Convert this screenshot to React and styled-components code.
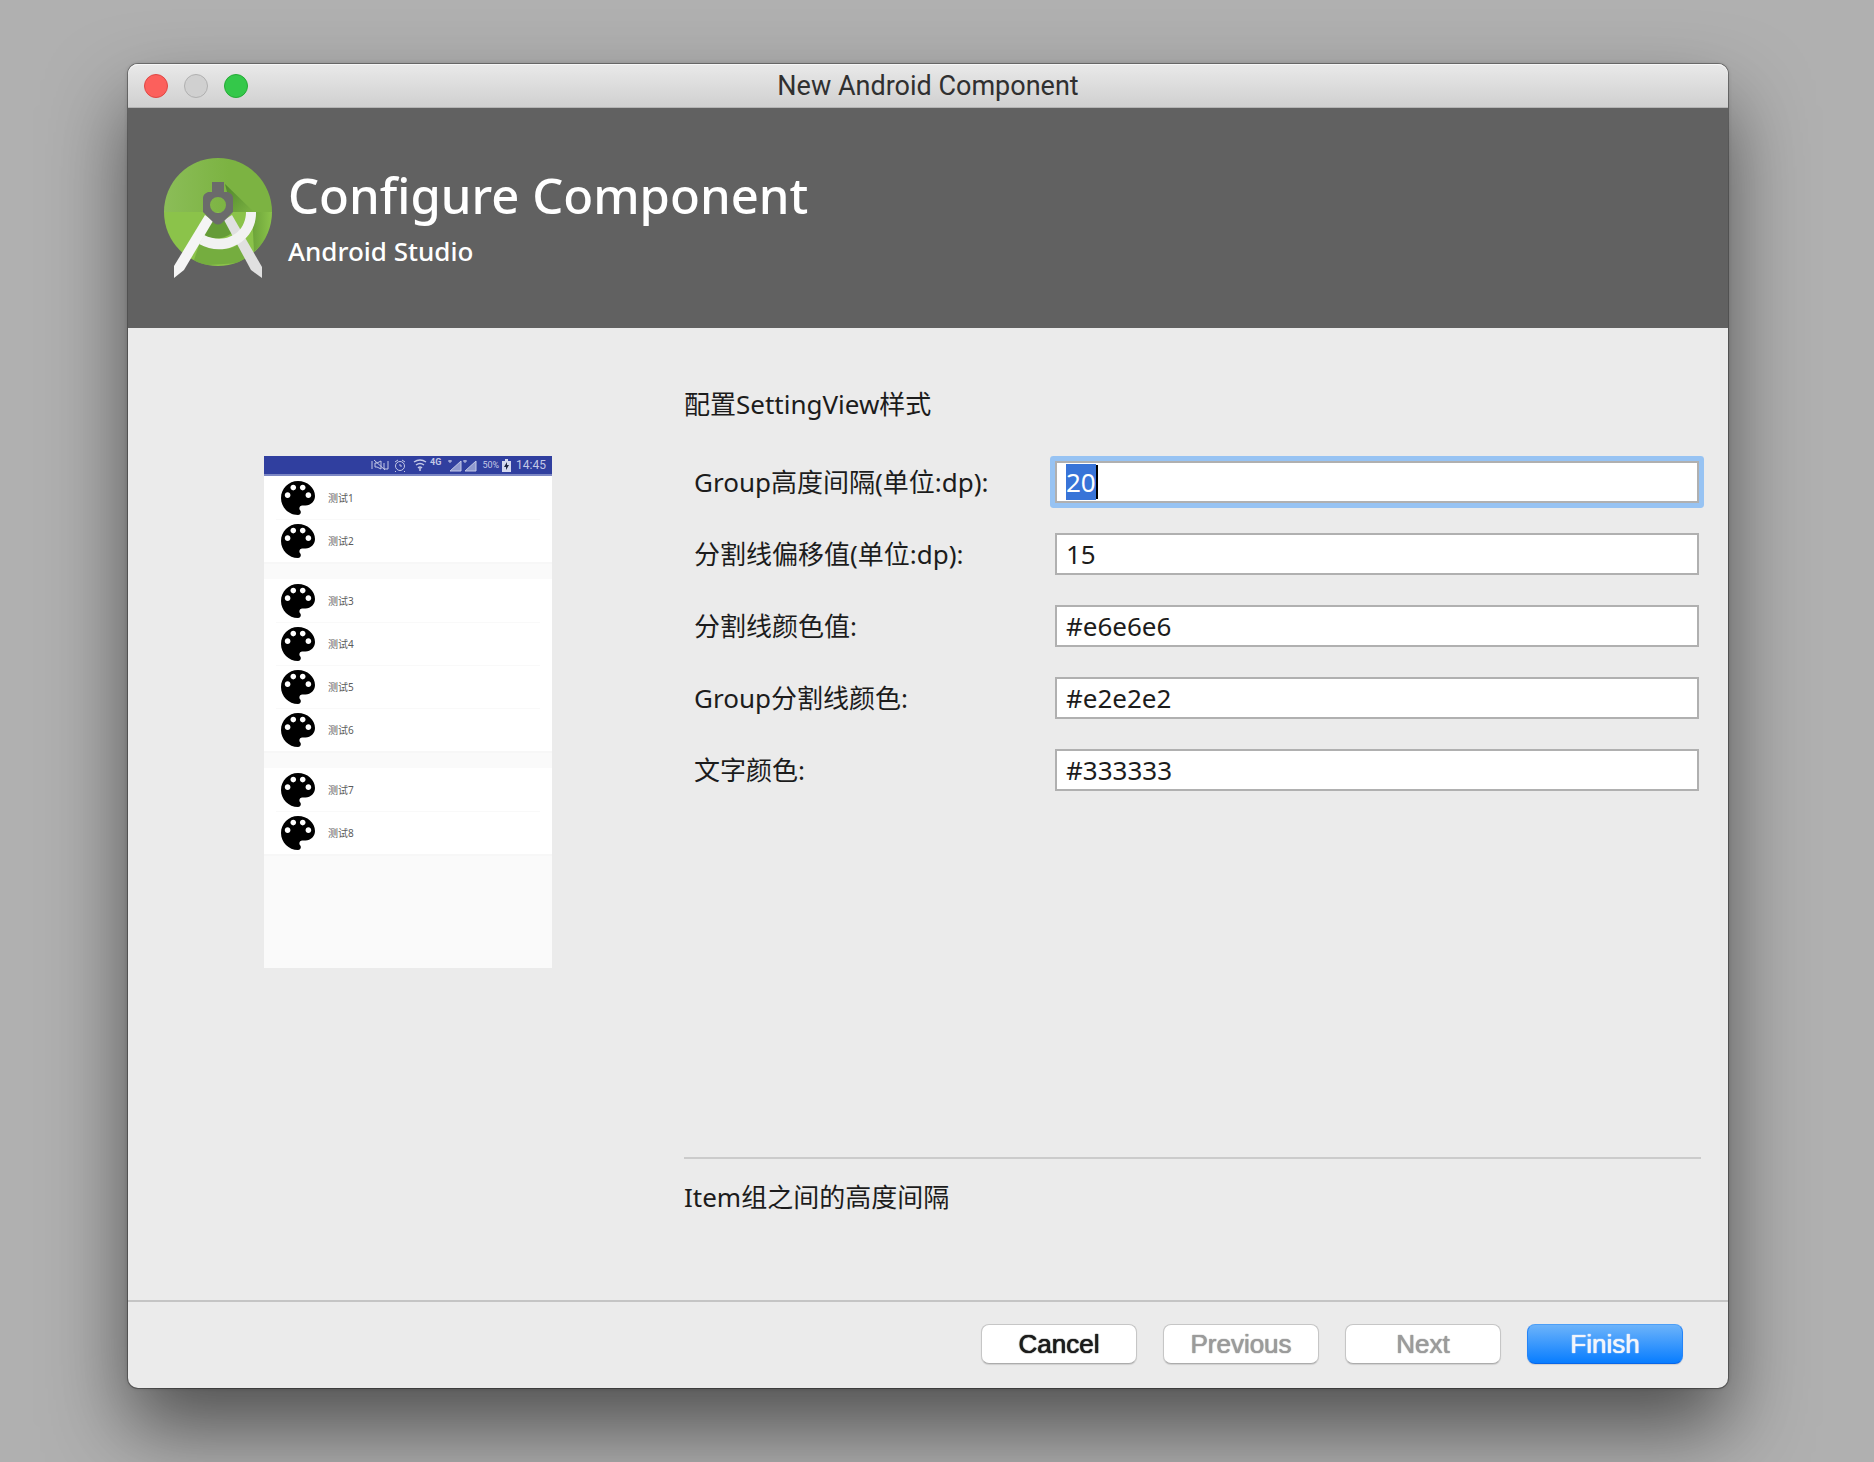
import React, { useEffect, useRef } from "react";
import styled, { createGlobalStyle, css } from "styled-components";

const uiFont = `"Noto Sans", "Noto Sans CJK SC", sans-serif`;

const GlobalStyle = createGlobalStyle`
  *, *::before, *::after { box-sizing: border-box; }
  body {
    margin: 0;
    background: #b0b0b0;
    color: #1c1c1c;
    font-family: ${uiFont};
    font-size: 26px;
    line-height: 36px;
  }
`;

const Desktop = styled.div`
  display: flex;
  min-height: 100vh;
  padding: 64px 146px 74px 128px;
  background: #b0b0b0;
  overflow: hidden;
`;

const Dialog = styled.main`
  display: flex;
  flex: 1;
  flex-direction: column;
  min-width: 0;
  border-radius: 10px;
  background: #ebebeb;
  box-shadow: 0 0 0 1px rgba(0, 0, 0, 0.3), 0 0 4px rgba(0, 0, 0, 0.2),
    0 40px 80px rgba(0, 0, 0, 0.55);
`;

const TitleBar = styled.header`
  display: grid;
  grid-template-columns: 1fr auto 1fr;
  align-items: center;
  height: 44px;
  padding: 0 16px;
  border-bottom: 1px solid #b4b4b4;
  border-radius: 10px 10px 0 0;
  background: linear-gradient(#e9e9e9, #d0d0d0);
  box-shadow: inset 0 1px 0 #f6f6f6;
`;

const Lights = styled.div`
  display: flex;
  gap: 16px;
`;

const Light = styled.button`
  width: 24px;
  height: 24px;
  padding: 0;
  border: 1px solid ${(p) => p.$edge};
  border-radius: 50%;
  background: ${(p) => p.$fill};
`;

const WindowTitle = styled.span`
  color: #303030;
  font-family: Roboto, sans-serif;
  font-size: 27px;
  line-height: 32px;
`;

const Banner = styled.section`
  display: flex;
  align-items: center;
  gap: 16px;
  height: 220px;
  padding: 2px 36px 0;
  background: #616161;
  color: #fff;
`;

const Heading = styled.h1`
  margin: 0;
  font-size: 49px;
  font-weight: 500;
  line-height: 64px;
`;

const SubHeading = styled.p`
  margin: 0;
  font-weight: 500;
  line-height: 48px;
`;

const Body = styled.section`
  display: flex;
  flex: 1;
  align-items: stretch;
`;

const PreviewPane = styled.div`
  flex: none;
  padding: 128px 132px 0 136px;
`;

const Phone = styled.div`
  width: 288px;
  height: 512px;
  background: #fafafa;
`;

const StatusBar = styled.div`
  display: flex;
  align-items: center;
  justify-content: flex-end;
  height: 20px;
  padding-right: 6px;
  border-bottom: 2px solid #7c87c4;
  background: #303f9f;
  color: #c3c8e6;
  font-family: Roboto, sans-serif;
  font-size: 9px;
  line-height: 18px;
`;

const StatusIcons = styled.svg`
  width: 108px;
  height: 18px;
  margin-right: 4px;
`;

const Battery = styled.svg`
  width: 9px;
  height: 13px;
  margin: 0 5px 0 3px;
`;

const Clock = styled.span`
  font-size: 12px;
`;

const Groups = styled.div`
  display: grid;
  gap: 17px;
`;

const Group = styled.ul`
  margin: 0;
  padding: 0;
  background: #fff;
  list-style: none;
  box-shadow: 0 2px 0 #f7f7f7;
`;

const Item = styled.li`
  display: flex;
  align-items: center;
  gap: 13px;
  height: 43px;
  margin: 0 12px;
  padding-left: 5px;
  color: #5c5c5c;
  font-size: 10px;
  line-height: 16px;

  & + & {
    border-top: 1px solid #f9f9f9;
  }
`;

const PaletteSvg = styled.svg`
  width: 34px;
  height: 34px;
`;

const Form = styled.form`
  display: flex;
  flex: 1;
  flex-direction: column;
  min-width: 0;
  padding: 58px 27px 85px 0;
`;

const FormTitle = styled.h2`
  margin: 0 0 39px;
  font-size: 26px;
  font-weight: 400;
  line-height: 36px;
`;

const Fields = styled.div`
  display: grid;
  gap: 30px;
`;

const Field = styled.div`
  display: grid;
  grid-template-columns: 361px minmax(0, 1fr);
  align-items: center;
  padding: 0 2px 0 10px;
`;

const InputBox = styled.div`
  position: relative;
  border-radius: 1px;

  ${(p) =>
    p.$active &&
    css`
      box-shadow: 0 0 0 5px #97c3f3;
    `}
`;

const TextInput = styled.input`
  display: block;
  width: 100%;
  height: 42px;
  padding: 3px 9px;
  border: 2px solid #b0b0b0;
  border-radius: 0;
  outline: none;
  background: #fff;
  caret-color: #000;
  color: #1c1c1c;
  font: inherit;
  line-height: 32px;

  &::selection {
    background: #3874d8;
    color: #fff;
  }
`;

const Caret = styled.span`
  position: absolute;
  top: 4px;
  left: 41px;
  width: 2px;
  height: 34px;
  background: #000;
`;

const Hint = styled.p`
  margin: auto 0 0;
  padding-top: 20px;
  border-top: 2px solid #cbcbcb;
`;

const Footer = styled.footer`
  display: flex;
  justify-content: flex-end;
  gap: 26px;
  padding: 22px 45px 24px;
  border-top: 2px solid #c4c4c4;
`;

const Button = styled.button`
  width: 156px;
  height: 40px;
  padding: 0;
  border: 1px solid #c6c6c6;
  border-bottom-color: #acacac;
  border-radius: 8px;
  background: #fff;
  box-shadow: 0 1px 1px rgba(0, 0, 0, 0.12);
  color: #1c1c1c;
  font-family: "Liberation Sans", Arial, sans-serif;
  font-size: 26px;
  line-height: 38px;
  text-shadow: 0 0 1px currentColor, 0 0 1px currentColor;

  &:disabled {
    color: #9b9b9b;
  }

  ${(p) =>
    p.$primary &&
    css`
      border-color: #4c9ff7 #2484f8 #0866e8;
      background: linear-gradient(#6cb3fa, #087dff);
      color: #f2f5fb;
    `}
`;

function StudioLogo() {
  return (
    <svg width="108" height="122" viewBox="0 0 108 122" aria-hidden="true">
      <defs>
        <clipPath id="disc">
          <circle cx="54" cy="54" r="54" />
        </clipPath>
        <linearGradient id="shade" x1="0" y1="0" x2="1" y2="1">
          <stop offset="0" stopColor="#33691e" stopOpacity="0.6" />
          <stop offset="1" stopColor="#33691e" stopOpacity="0" />
        </linearGradient>
        <linearGradient id="sweep" x1="0" y1="0" x2="1" y2="0">
          <stop offset="0" stopColor="#689f38" stopOpacity="0.9" />
          <stop offset="1" stopColor="#689f38" stopOpacity="0" />
        </linearGradient>
        <linearGradient id="top" x1="0" y1="0" x2="1" y2="0">
          <stop offset="0" stopColor="#8bbd58" />
          <stop offset="0.6" stopColor="#7cb342" />
        </linearGradient>
      </defs>
      <g clipPath="url(#disc)">
        <rect width="108" height="54" fill="url(#top)" />
        <rect y="54" width="108" height="54" fill="#8bc34a" />
        <path d="M61 26L90 54H68Z" fill="url(#shade)" />
        <path d="M88 54H108V76L90 94Z" fill="url(#sweep)" />
        <path d="M28 108L36 84C60 98 74 88 80 82L92 104Z" fill="#689f38" opacity="0.6" />
        <path d="M47 60L40 77C50 83 62 81 70 73L60 58Z" fill="#558b2f" opacity="0.7" />
      </g>
      <path d="M60 62L68 57L98 109V120L87 112Z" fill="#e0e0e0" />
      <path d="M41 57L49 63L20 112L10 120V108Z" fill="#f5f5f5" />
      <path d="M82 54H92C93 82 62 101 35 86L40 77C60 87 82 76 82 54Z" fill="#f2f2f2" />
      <path
        fillRule="evenodd"
        fill="#6b6b6b"
        d="M48 24H60V34H64Q69 36 69 40V54L58 65Q54 68 50 65L39 54V40Q39 36 44 34H48ZM54 39A8 8 0 1 0 54 55A8 8 0 1 0 54 39Z"
      />
    </svg>
  );
}

function PaletteIcon() {
  return (
    <PaletteSvg viewBox="3 3 18 18" aria-hidden="true">
      <path d="M12 3c-4.970 0-9 4.030-9 9s4.030 9 9 9c.83 0 1.500-.67 1.500-1.500 0-.39-.15-.74-.39-1.010-.23-.26-.38-.61-.38-.99 0-.83.67-1.500 1.500-1.500H16c2.760 0 5-2.240 5-5 0-4.420-4.030-8-9-8zm-5.500 9c-.83 0-1.500-.67-1.500-1.500S5.670 9 6.500 9 8 9.670 8 10.500 7.330 12 6.500 12zm3-4C8.670 8 8 7.330 8 6.500S8.670 5 9.500 5s1.500.67 1.500 1.500S10.330 8 9.500 8zm5 0c-.83 0-1.500-.67-1.500-1.500S13.670 5 14.500 5s1.500.67 1.500 1.500S15.330 8 14.500 8zm3 4c-.83 0-1.500-.67-1.500-1.500S16.670 9 17.500 9s1.500.67 1.500 1.500-.67 1.500-1.500 1.500z" />
    </PaletteSvg>
  );
}

function PhoneStatus() {
  return (
    <StatusBar>
      <StatusIcons viewBox="0 0 108 18" fill="none" stroke="#c3c8e6" aria-hidden="true">
        <path d="M2 5V13M18 5V13M5 7H7L11 5V13L7 11H5ZM4 4L15 14M14 7V13H18" />
        <circle cx="30" cy="10" r="4.500" />
        <path d="M30 8V10H32M25 6L28 4M35 6L32 4M26 15L25 16M34 15L35 16" />
        <path d="M44 6Q50 2 56 6M46 9Q50 6 54 9M48 12Q50 10 52 12M50 12V15" strokeWidth="1.500" />
        <path d="M80 15H91V5Z M95 15H106V5Z" fill="#8f99cf" />
        <path d="M78 5H82M80 4V7M93 5H97M95 4V7" />
        <text x="60" y="9" fill="#c3c8e6" stroke="none" fontSize="9" fontWeight="700">4G</text>
      </StatusIcons>
      <span>50%</span>
      <Battery viewBox="0 0 9 13" aria-hidden="true">
        <path d="M3 0H6V2H9V13H0V2H3Z" fill="#d4d8ee" />
        <path d="M5 3L2 8H4V11L7 6H5Z" fill="#1c2340" />
      </Battery>
      <Clock>14:45</Clock>
    </StatusBar>
  );
}

const groups = [
  ["测试1", "测试2"],
  ["测试3", "测试4", "测试5", "测试6"],
  ["测试7", "测试8"],
];

const fields = [
  { id: "group-gap", label: "Group高度间隔(单位:dp):", value: "20", active: true },
  { id: "divider-offset", label: "分割线偏移值(单位:dp):", value: "15" },
  { id: "divider-color", label: "分割线颜色值:", value: "#e6e6e6" },
  { id: "group-divider-color", label: "Group分割线颜色:", value: "#e2e2e2" },
  { id: "text-color", label: "文字颜色:", value: "#333333" },
];

export default function App() {
  const activeInput = useRef(null);

  useEffect(() => {
    activeInput.current.focus();
    activeInput.current.select();
  }, []);

  return (
    <>
      <GlobalStyle />
      <Desktop>
        <Dialog>
          <TitleBar>
            <Lights>
              <Light type="button" aria-label="Close" $fill="#fc605c" $edge="#df4744" />
              <Light type="button" aria-label="Minimize" $fill="#d0d0d0" $edge="#b0b0b0" />
              <Light type="button" aria-label="Zoom" $fill="#34c84a" $edge="#24ab35" />
            </Lights>
            <WindowTitle>New Android Component</WindowTitle>
          </TitleBar>
          <Banner>
            <StudioLogo />
            <div>
              <Heading>Configure Component</Heading>
              <SubHeading>Android Studio</SubHeading>
            </div>
          </Banner>
          <Body>
            <PreviewPane>
              <Phone>
                <PhoneStatus />
                <Groups>
                  {groups.map((items) => (
                    <Group key={items[0]}>
                      {items.map((name) => (
                        <Item key={name}>
                          <PaletteIcon />
                          {name}
                        </Item>
                      ))}
                    </Group>
                  ))}
                </Groups>
              </Phone>
            </PreviewPane>
            <Form id="component-form" onSubmit={(e) => e.preventDefault()}>
              <FormTitle>配置SettingView样式</FormTitle>
              <Fields>
                {fields.map((f) => (
                  <Field key={f.id}>
                    <label htmlFor={f.id}>{f.label}</label>
                    <InputBox $active={f.active}>
                      <TextInput
                        id={f.id}
                        type="text"
                        defaultValue={f.value}
                        ref={f.active ? activeInput : null}
                      />
                      {f.active && <Caret />}
                    </InputBox>
                  </Field>
                ))}
              </Fields>
              <Hint>Item组之间的高度间隔</Hint>
            </Form>
          </Body>
          <Footer>
            <Button type="button">Cancel</Button>
            <Button type="button" disabled>Previous</Button>
            <Button type="button" disabled>Next</Button>
            <Button type="submit" form="component-form" $primary>Finish</Button>
          </Footer>
        </Dialog>
      </Desktop>
    </>
  );
}
